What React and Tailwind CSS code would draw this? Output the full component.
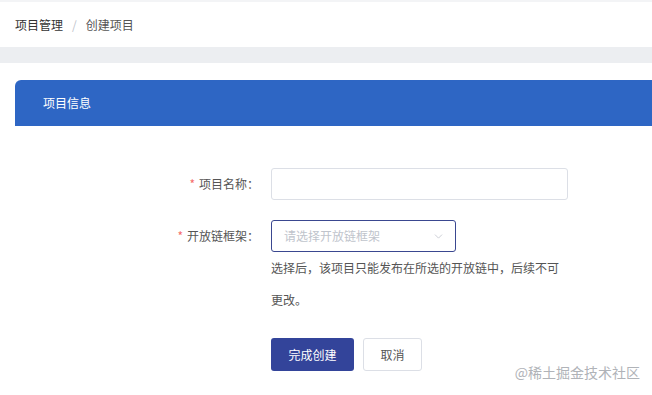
import { ChevronDown } from 'lucide-react';

const App = () => {
  return (
    <div
      className="relative w-[652px] h-[395px] overflow-hidden bg-white text-[12px]"
      style={{ fontFamily: '"Noto Sans CJK SC", "Noto Sans", sans-serif' }}
    >
      <div className="h-[2px] bg-[#f3f4f6]" />
      <div className="h-[45px] flex items-center pl-[15px] text-[#333]">
        <span>项目管理</span>
        <span className="mx-[9px] text-[#c0c4cc]">/</span>
        <span className="text-[#555]">创建项目</span>
      </div>
      <div className="h-[16px] bg-[#eceef1]" />

      <div className="pt-[17px] pl-[15px]">
        <div className="h-[46px] bg-[#2e66c4] rounded-tl-[6px] flex items-center pl-[28px] text-white text-[12px]">
          项目信息
        </div>
      </div>

      <div className="pt-[42px]">
        <div className="flex items-center h-[32px]">
          <label className="w-[259px] text-right text-[#555]">
            <span className="text-[#f56c6c] mr-[4px]">*</span>项目名称：
          </label>
          <input className="ml-[12px] w-[297px] h-[32px] border border-[#dcdfe6] rounded-[3px] outline-none" />
        </div>

        <div className="flex items-center h-[32px] mt-[20px]">
          <label className="w-[259px] text-right text-[#555]">
            <span className="text-[#f56c6c] mr-[4px]">*</span>开放链框架：
          </label>
          <div className="ml-[12px] w-[185px] h-[32px] border border-[#3a4790] rounded-[3px] flex items-center justify-between pl-[12px] pr-[10px]">
            <span className="text-[#c0c4cc]">请选择开放链框架</span>
            <ChevronDown size={13} strokeWidth={1.5} className="text-[#c0c4cc]" />
          </div>
        </div>

        <div className="ml-[271px] w-[290px] leading-[32px] text-[#555]">
          选择后，该项目只能发布在所选的开放链中，后续不可更改。
        </div>

        <div className="ml-[271px] mt-[22px] flex gap-[9px]">
          <button className="w-[83px] h-[33px] bg-[#33449a] text-white rounded-[3px]">
            完成创建
          </button>
          <button className="w-[59px] h-[33px] bg-white border border-[#dcdfe6] text-[#555] rounded-[3px]">
            取消
          </button>
        </div>
      </div>

      <div className="absolute right-[12px] bottom-[12px] text-[14px] text-[#b0b3b8]">
        @稀土掘金技术社区
      </div>
    </div>
  );
};

export default App;
